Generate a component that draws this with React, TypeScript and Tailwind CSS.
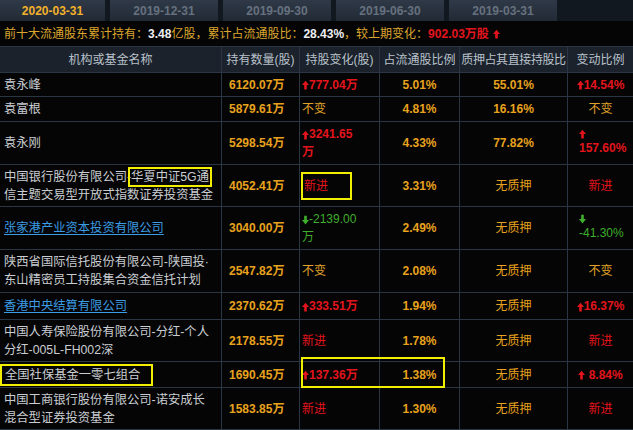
import React from 'react'

const cn = "font-['Liberation_Sans','Noto_Sans_CJK_SC',sans-serif]"

const Up = ({ green }: { green?: boolean }) =>
  green ? (
    <svg width="7" height="10" viewBox="0 0 8 10" className="inline-block fill-[#3fae2c]">
      <path d="M4 10L8 5H5.5V0H2.5V5H0Z" />
    </svg>
  ) : (
    <svg width="7" height="10" viewBox="0 0 8 10" className="inline-block fill-[#e3141c]">
      <path d="M4 0L8 5H5.5V10H2.5V5H0Z" />
    </svg>
  )

const tabs = ['2020-03-31', '2019-12-31', '2019-09-30', '2019-06-30', '2019-03-31']

const cols = 'grid grid-cols-[222px_78px_80px_80px_108px_65px]'
const cell = 'border-r border-[#2b3645] flex items-center'

type RowProps = {
  h: string
  name: React.ReactNode
  amt: string
  chg: React.ReactNode
  ratio: string
  pledge: string
  vr: React.ReactNode
  overlay?: React.ReactNode
}

function Row({ h, name, amt, chg, ratio, pledge, vr, overlay }: RowProps) {
  return (
    <div className={`${cols} ${h} relative border-b border-[#2b3645]`}>
      <div className={`${cell} pl-[4px] text-[#c9cdd2] text-[12.3px] leading-[18px]`}>{name}</div>
      <div className={`${cell} pl-[7px] text-[#e8a21e] text-[12px] font-bold`}>{amt}</div>
      <div className={`${cell} pl-[2px] text-[12px] leading-[18px]`}>{chg}</div>
      <div className={`${cell} justify-center text-[#e8a21e] text-[12px] font-bold`}>{ratio}</div>
      <div className={`${cell} justify-center text-[#e8a21e] text-[12px] ${pledge.includes('%') ? 'font-bold' : ''}`}>{pledge}</div>
      <div className="flex items-center justify-center text-[12px] leading-[18px]">{vr}</div>
      {overlay}
    </div>
  )
}

const Red = ({ children }: { children: React.ReactNode }) => (
  <span className="text-[#e3141c] font-bold">{children}</span>
)
const Same = () => <span className="text-[#e0a22a]">不变</span>
const New = () => <span className="text-[#e3141c]">新进</span>
const Link = ({ children }: { children: React.ReactNode }) => (
  <span className="text-[#3b9be3] underline underline-offset-2">{children}</span>
)

export default function App() {
  return (
    <div className={`w-[633px] h-[430px] overflow-hidden bg-[#050505] ${cn}`}>
      {/* tabs */}
      <div className="flex gap-[5px] h-[21px] bg-[#121820]">
        {tabs.map((t, i) => (
          <div
            key={t}
            className={`${i === 0 ? 'w-[105px] text-[#f2b12a]' : 'w-[108px] text-[#66717e]'} flex items-center justify-center bg-gradient-to-b from-[#2f3947] to-[#222a36] text-[12px] font-bold`}
          >
            {t}
          </div>
        ))}
      </div>

      {/* summary */}
      <div className="h-[26px] flex items-center pl-[4px] text-[12px] text-[#dca62e] border-b border-[#2b3645]">
        前十大流通股东累计持有：<span className="text-[#eef0f2] font-bold">3.48</span>亿股，累计占流通股比：
        <span className="text-[#eef0f2] font-bold">28.43%</span>，较上期变化：
        <span className="text-[#e3141c] font-bold">902.03万股</span>
        <span className="ml-[4px] flex">
          <Up />
        </span>
      </div>

      {/* header */}
      <div className={`${cols} h-[26px] bg-[#1b222c] border-b border-[#2b3645] text-[12px] text-[#b9c1ca] whitespace-nowrap`}>
        {['机构或基金名称', '持有数量(股)', '持股变化(股)', '占流通股比例'].map((t) => (
          <div key={t} className={`${cell} justify-center`}>
            {t}
          </div>
        ))}
        <div className={`${cell} justify-center tracking-[-0.4px]`}>质押占其直接持股比</div>
        <div className="flex items-center justify-center">变动比例</div>
      </div>

      <Row
        h="h-[24px]"
        name="袁永峰"
        amt="6120.07万"
        chg={<Red><Up />777.04万</Red>}
        ratio="5.01%"
        pledge="55.01%"
        vr={<Red><Up />14.54%</Red>}
      />
      <Row h="h-[25px]" name="袁富根" amt="5879.61万" chg={<Same />} ratio="4.81%" pledge="16.16%" vr={<Same />} />
      <Row
        h="h-[43px]"
        name="袁永刚"
        amt="5298.54万"
        chg={<Red><Up />3241.65<br />万</Red>}
        ratio="4.33%"
        pledge="77.82%"
        vr={
          <div className="flex flex-col items-start pl-[11px] w-full">
            <Up />
            <Red>157.60%</Red>
          </div>
        }
      />
      <Row
        h="h-[42px]"
        name={
          <span>
            中国银行股份有限公司-
            <span className="outline-2 outline-[#f2ee00] outline-offset-[1px]">华夏中证5G通</span>
            <br />
            信主题交易型开放式指数证券投资基金
          </span>
        }
        amt="4052.41万"
        chg={
          <div className="w-[51px] h-[28px] border-2 border-[#f2ee00] flex items-center pl-[1px] -ml-[1px]">
            <New />
          </div>
        }
        ratio="3.31%"
        pledge="无质押"
        vr={<New />}
      />
      <Row
        h="h-[43px]"
        name={<Link>张家港产业资本投资有限公司</Link>}
        amt="3040.00万"
        chg={
          <span className="text-[#3fae2c]">
            <Up green />-2139.00
            <br />万
          </span>
        }
        ratio="2.49%"
        pledge="无质押"
        vr={
          <div className="flex flex-col items-start pl-[11px] w-full text-[#3fae2c]">
            <Up green />
            <span>-41.30%</span>
          </div>
        }
      />
      <Row
        h="h-[43px]"
        name={
          <span>
            陕西省国际信托股份有限公司-陕国投·
            <br />
            东山精密员工持股集合资金信托计划
          </span>
        }
        amt="2547.82万"
        chg={<Same />}
        ratio="2.08%"
        pledge="无质押"
        vr={<Same />}
      />
      <Row
        h="h-[27px]"
        name={<Link>香港中央结算有限公司</Link>}
        amt="2370.62万"
        chg={<Red><Up />333.51万</Red>}
        ratio="1.94%"
        pledge="无质押"
        vr={<Red><Up />16.37%</Red>}
      />
      <Row
        h="h-[42px]"
        name={
          <span>
            中国人寿保险股份有限公司-分红-个人
            <br />
            分红-005L-FH002深
          </span>
        }
        amt="2178.55万"
        chg={<New />}
        ratio="1.78%"
        pledge="无质押"
        vr={<New />}
      />
      <Row
        h="h-[26px]"
        name={
          <span className="-ml-[4px] h-[22px] w-[153px] border-2 border-[#f2ee00] flex items-center pl-[3px]">
            全国社保基金一零七组合
          </span>
        }
        amt="1690.45万"
        chg={<Red><Up />137.36万</Red>}
        ratio="1.38%"
        pledge="无质押"
        vr={<Red><Up /> 8.84%</Red>}
        overlay={
          <div className="absolute left-[301px] top-[-5px] w-[144px] h-[31px] border-2 border-[#f2ee00]" />
        }
      />
      <Row
        h="h-[42px]"
        name={
          <span>
            中国工商银行股份有限公司-诺安成长
            <br />
            混合型证券投资基金
          </span>
        }
        amt="1583.85万"
        chg={<New />}
        ratio="1.30%"
        pledge="无质押"
        vr={<New />}
      />
    </div>
  )
}
